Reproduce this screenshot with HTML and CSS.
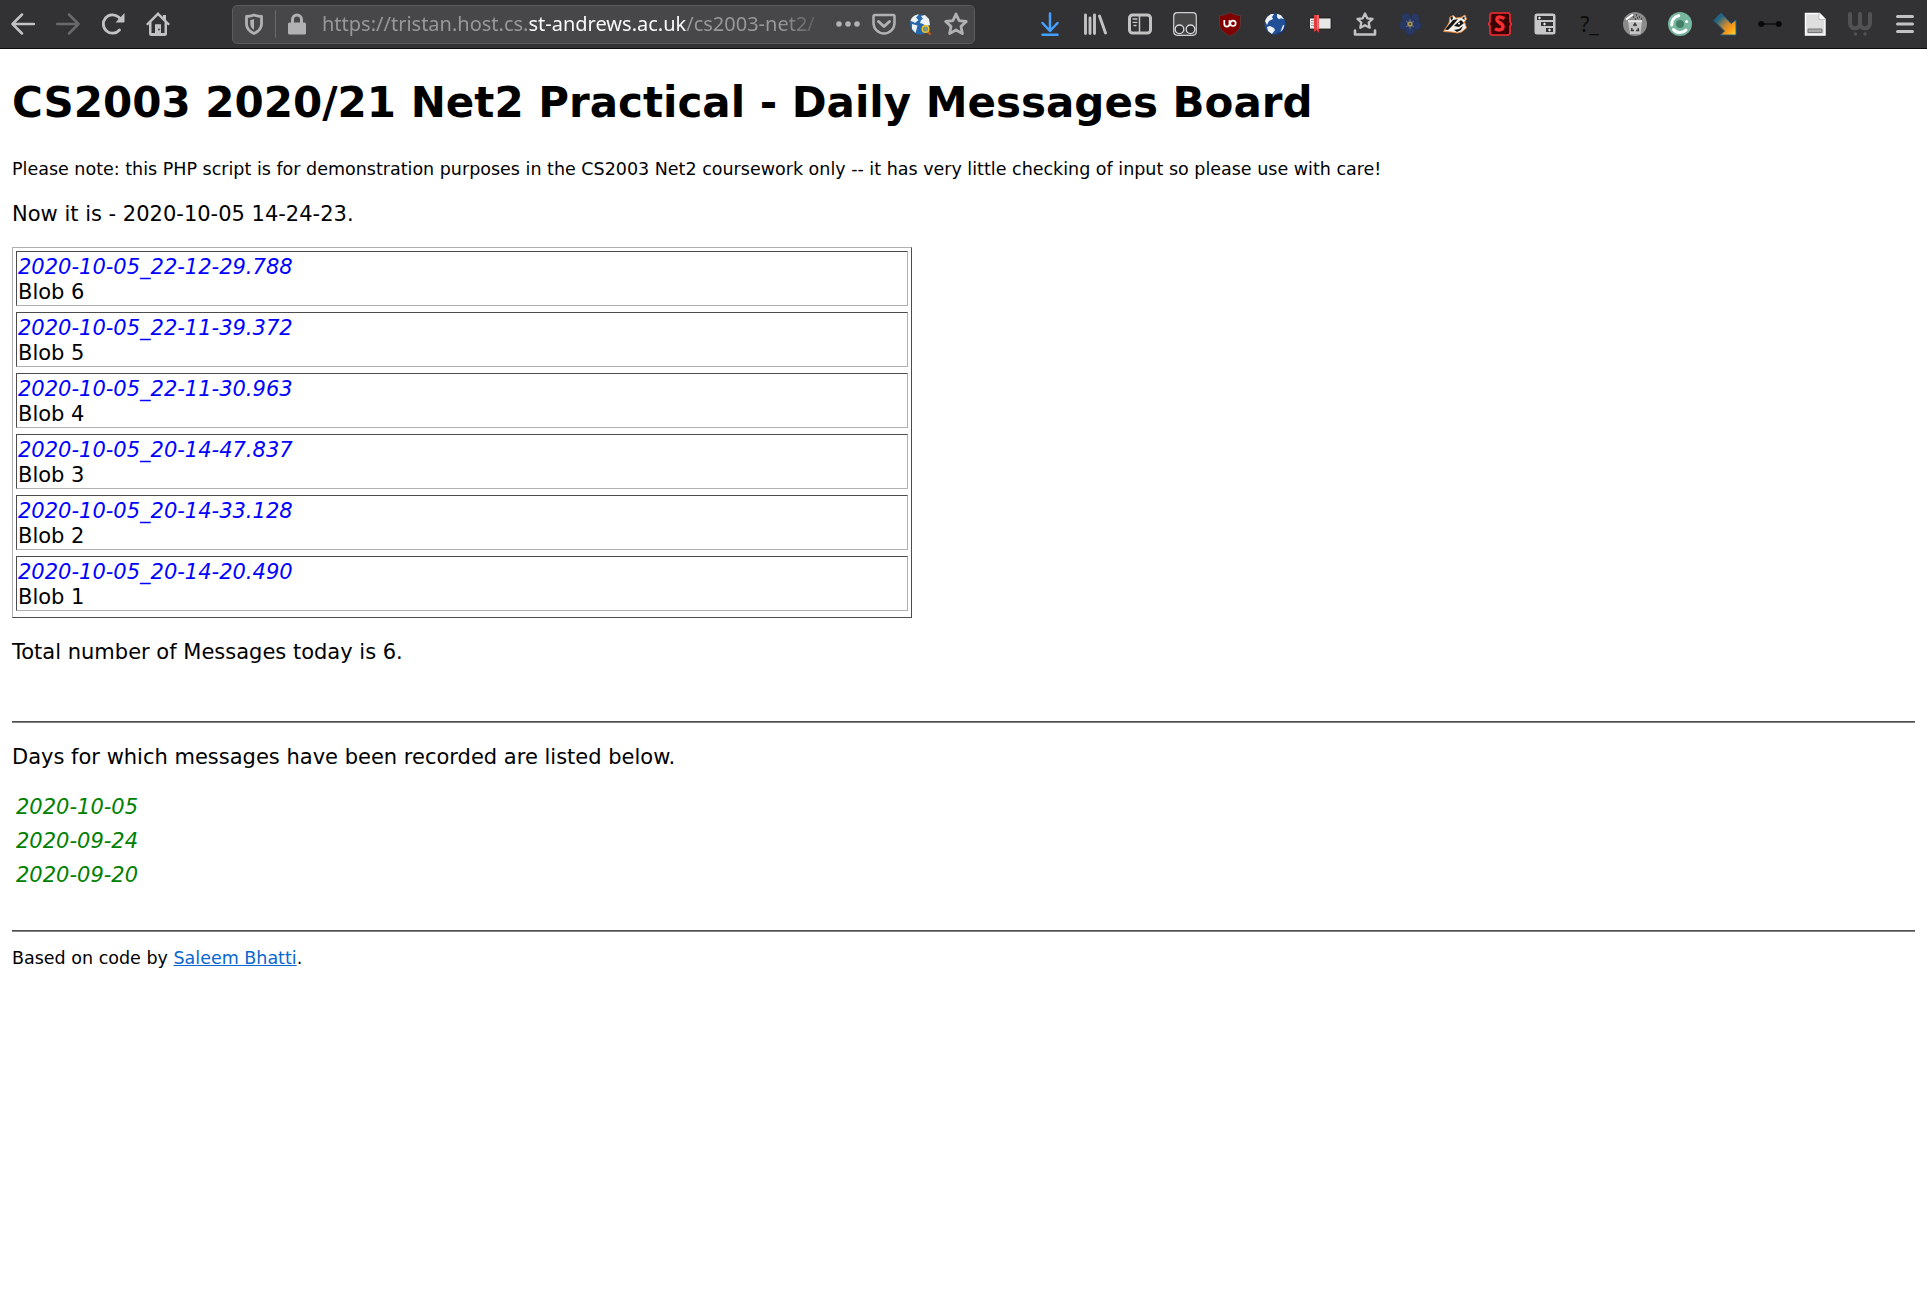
FILE: index.html
```html
<!DOCTYPE html>
<html lang="en">
<head>
<meta charset="utf-8">
<title>Daily Messages Board</title>
<link rel="stylesheet" href="styles.css">
</head>
<body>
<header class="toolbar">
  <nav class="tools" aria-label="Navigation">
    <button class="tool" aria-label="Back"><svg viewBox="0 0 24 24" class="line"><path d="M23 12H2M11 2.500L1.500 12l9.500 9.500"/></svg></button>
    <button class="tool dim" aria-label="Forward"><svg viewBox="0 0 24 24" class="line"><path d="M1 12h21M13 2.500l9.500 9.500-9.500 9.500"/></svg></button>
    <button class="tool" aria-label="Reload"><svg viewBox="0 0 24 24" class="line"><path d="M18.500 18a9.200 9.200 0 1 1-1-13l2.500 2.500" stroke-width="2.800"/><path d="M23.500 1v8.500a1 1 0 0 1-1 1h-8z" fill="currentColor" stroke="none"/></svg></button>
    <button class="tool" aria-label="Home"><svg viewBox="0 0 24 24"><path d="M12 0L0 12l1.600 1.600L3 12.300V21.500a2.500 2.500 0 0 0 2.500 2.500h13a2.500 2.500 0 0 0 2.500-2.500v-9.200l1.400 1.300L24 12l-4-4V3h-3v2zM12 3.400l6.500 6.500V21H15v-8.500H9V21H5.500V9.900z" fill="currentColor" fill-rule="evenodd"/><path d="M9 12.500h6V21H9z" fill="currentColor"/><circle cx="13" cy="17.500" r=".9" fill="#323234"/></svg></button>
  </nav>
  <div class="address">
    <button class="site" aria-label="Tracking protection"><svg viewBox="0 0 24 24" class="line"><path d="M12 3Q16 4.500 19.500 4.500V12c0 4-3 7.500-7.500 9.500C7.500 19.500 4.500 16 4.500 12V4.500Q8 4.500 12 3z" stroke-width="2.800"/><path d="M12 7v10.800C9.200 16 8.300 14 8.300 11.500V8Q10.500 8 12 7z" fill="currentColor" stroke="none"/></svg></button>
    <span class="rule"></span>
    <button class="site" aria-label="Connection secure"><svg viewBox="0 0 24 24"><path d="M7.500 11V7.500a4.500 4.500 0 0 1 9 0V11" fill="none" stroke="currentColor" stroke-width="3"/><rect x="3" y="10.500" width="18" height="12" rx="1.500" fill="currentColor"/></svg></button>
    <div class="url" role="textbox" contenteditable="true" spellcheck="false" aria-label="Address">https://tristan.host.cs.<span class="domain">st-andrews.ac.uk</span>/cs2003-net2/</div>
    <button class="action" aria-label="Page actions"><svg viewBox="0 0 24 24" fill="currentColor"><circle cx="3" cy="12" r="2.800"/><circle cx="12" cy="12" r="2.800"/><circle cx="21" cy="12" r="2.800"/></svg></button>
    <button class="action" aria-label="Save to Pocket"><svg viewBox="0 0 24 24" class="line"><path d="M2.800 3h18.400a1.300 1.300 0 0 1 1.300 1.300V11a10.500 10.500 0 0 1-21 0V4.300A1.300 1.300 0 0 1 2.800 3z"/><path d="M6.500 9.500l5.500 5 5.500-5" stroke-width="3"/></svg></button>
    <button class="action" aria-label="Site search"><svg viewBox="0 0 24 24"><circle cx="12" cy="12.500" r="10" fill="#2568ad"/><path d="M2.500 9C3.500 5 7 2.500 11 2.500L8 5.500 10.500 8 7 11l-1.500-1zM4 12l5.500 1.500-1 4L7.500 21 4 17zM13 4l4-1 4 4 1 6-4 1-3-2-3-1 1-3 2-1z" fill="#edf3f5"/><path d="M20 20l2.500 2.500" stroke="#b8571d" stroke-width="2.500"/><circle cx="17.500" cy="17" r="3.300" fill="#769492" stroke="#f2c51c" stroke-width="1.400"/></svg></button>
    <button class="action" aria-label="Bookmark this page"><svg viewBox="0 0 24 24" class="line"><path d="M12 2l3.100 6.600 7.200.9-5.300 4.900 1.400 7.200L12 18l-6.400 3.600L7 14.400 1.700 9.500l7.200-.9z" stroke-width="2.800"/></svg></button>
  </div>
  <div class="tools">
    <button class="tool blue" aria-label="Downloads"><svg viewBox="0 0 24 24" class="line"><path d="M12 1.500v17M4.500 11l7.500 8 7.500-8M4.500 22.700h15"/></svg></button>
    <button class="tool" aria-label="Library"><svg viewBox="0 0 24 24" class="line"><path d="M2.500 3v18.500M7 6v15.500M11.500 3v18.500M16.500 4l6 17" stroke-width="2.900"/></svg></button>
    <button class="tool" aria-label="Sidebars"><svg viewBox="0 0 24 24" class="line"><rect x="1.500" y="3" width="21" height="18" rx="3" stroke-width="3"/><path d="M11.500 4v16" stroke-width="1.500"/><path d="M5 7h4M5 10.300h4M6 13.500h2" stroke-width="1.300"/></svg></button>
    <button class="tool" aria-label="Containers"><svg viewBox="0 0 24 24"><rect x=".7" y=".7" width="22.600" height="22.600" rx="3.500" fill="#474747" stroke="#d0d0d0" stroke-width="1.200"/><g fill="#323234" stroke="#d8d8d8" stroke-width="1.300"><circle cx="6.500" cy="17.300" r="4.300"/><circle cx="17.500" cy="17.300" r="4.300"/></g></svg></button>
    <button class="tool" aria-label="Content blocker"><svg viewBox="0 0 24 24"><path d="M12 .5Q17 3.500 22.500 3.500V11c0 6-4 10-10.500 13C5.500 21 1.500 17 1.500 11V3.500Q7 3.500 12 .5z" fill="#800000" stroke="#5b3f40" stroke-width=".8"/><path d="M6.300 8v4a2.600 2.600 0 0 0 5.200 0V8" fill="none" stroke="#fff" stroke-width="1.700"/><circle cx="15" cy="11.300" r="2.700" fill="none" stroke="#fff" stroke-width="1.700"/></svg></button>
    <button class="tool" aria-label="Translate"><svg viewBox="0 0 24 24"><circle cx="12" cy="12" r="10.500" fill="#214f97"/><path d="M2 9l2-4 4-3h3L9 5l1 2-4 2-2 4zM14 1.800l4 1.400 3 4-3-1-2 1-2-2zM4 15l3-1 4 2 1 2-3 4-4-3zM20 13l2 1-2 5-3 2z" fill="#edf2f5"/><path d="M14 22a10 10 0 0 0 8-8" fill="none" stroke="#1b3474" stroke-width="1.500"/></svg></button>
    <button class="tool" aria-label="Bookmarks ribbon"><svg viewBox="0 0 24 24"><path d="M1.500 6H23v11H1.500z" fill="#e7e7e7" stroke="#171717" stroke-width=".8"/><path d="M3 8.500h3M3 11h3M3 13.500h3" stroke="#999"/><path d="M6 3h5v18l-2.500-3L6 20z" fill="#e43b3f"/><path d="M9 3h1.500v14H9z" fill="#ff7774"/></svg></button>
    <button class="tool" aria-label="Show bookmarks"><svg viewBox="0 0 24 24" class="line"><path d="M12 1.500l2.300 4.800 5.200.7-3.800 3.500 1 5.200-4.700-2.500-4.700 2.500 1-5.200L4.500 7l5.200-.7z" stroke-width="2.300"/><path d="M2 18.500v4h20v-4" stroke-width="2.600"/></svg></button>
    <button class="tool" aria-label="Forget me not"><svg viewBox="0 0 24 24"><g fill="#293966" stroke="#24315b" stroke-width=".6"><circle cx="8" cy="5.500" r="4.300"/><circle cx="17" cy="6" r="4.300"/><circle cx="5.500" cy="13.500" r="4.300"/><circle cx="19" cy="13.500" r="4.300"/><circle cx="12" cy="18.500" r="4.600"/><circle cx="12" cy="11" r="5"/></g><path d="M12 7v10M8 9l8 6M16 9l-8 6" stroke="#6d718c"/><circle cx="12" cy="12" r="2.600" fill="#a99a55"/><circle cx="12" cy="12" r="1.100" fill="#4b4533"/></svg></button>
    <button class="tool" aria-label="Privacy badger"><svg viewBox="0 0 24 24"><path d="M.5 19.500L6 11l1-6 3.500-1.500L13 6l5-.5L22 3l1.500 4-2 3 2 6-5 4-4 1-6-1z" fill="#f4f1eb" stroke="#e4863d" stroke-width="1"/><path d="M2 17.500L10 8l5-1-5 6-5 5zM13 12l5-4 3 3-5 4-5-1zM7.500 5l2-.5.5 2-2 2zM19 6l2.500-1.500V8zM11 18l5-1 4-3-2 4-4 2z" fill="#171717"/><circle cx="16" cy="11.500" r="1" fill="#fff"/></svg></button>
    <button class="tool" aria-label="Stylus"><svg viewBox="0 0 24 24"><path d="M3.500 1h17.300L22 2.500V10l1.500 2-1.500 2v7.500L20.500 23h-17L2 21.500V14L.5 12 2 10V2.500z" fill="#380202" stroke="#fb2c30" stroke-width="1.600"/><path d="M16.500 6.500Q8.500 3 9 8c.3 3 6.500 3 6 7-.4 3.500-5 3.500-8 1.800" fill="none" stroke="#fb2c30" stroke-width="3.500"/></svg></button>
    <button class="tool" aria-label="Tree tabs"><svg viewBox="0 0 24 24"><rect x="1.500" y="1.500" width="21" height="21" rx="2.500" fill="#c7c7c7"/><g fill="#323234"><path d="M4 4h16v4H4zM8 10h12v4H8zM13 16h7v4h-7z"/></g><path d="M5 6h3M10 12h3M15 18h3M6.500 4.700v2.600M11.500 10.700v2.600M16.500 16.700v2.600" stroke="#eee"/></svg></button>
    <button class="tool terminal" aria-label="Terminal">?_</button>
    <button class="tool" aria-label="Cookie cleaner"><svg viewBox="0 0 24 24"><circle cx="12" cy="12" r="12" fill="#8b8b8b"/><path d="M5 9h14l-1.500 13H7z" fill="#c4c4c4"/><path d="M3 7.500l7-5" stroke="#fff" stroke-width="2"/><path d="M5 9h14" stroke="#eee" stroke-width="1.500"/><path d="M10 5h1M13 3h1M16 5h1M12 7h1M18 7h1M14 6h1" stroke="#383838" stroke-width="1.500"/><path d="M10.500 14l1.500-2.500 1.500 2.500M15 16l.5 2.500H13M9 16l-.5 2.500H11" fill="none" stroke="#3a3a3a" stroke-width="1.500"/></svg></button>
    <button class="tool" aria-label="Session sync"><svg viewBox="0 0 24 24"><circle cx="12" cy="12" r="12" fill="#78b79f"/><circle cx="12" cy="12" r="4" fill="#437e67"/><path d="M3.800 13a8.300 8.300 0 0 1 7-9.300M5.500 17.500A8.300 8.300 0 0 0 18 18" fill="none" stroke="#fff" stroke-width="3" stroke-linecap="round"/><circle cx="18.700" cy="9.500" r="1.500" fill="#fff"/></svg></button>
    <button class="tool" aria-label="Send down"><svg viewBox="0 0 24 24"><defs><linearGradient id="arrow" x1="0" y1="0" x2="1" y2="1"><stop offset=".25" stop-color="#236684"/><stop offset=".55" stop-color="#cb8933"/><stop offset=".75" stop-color="#ff9d13"/><stop offset="1" stop-color="#ffe24a"/></linearGradient></defs><path d="M.8 8.500L8 1l10 10.500L23 8v15H7.500l4-4z" fill="url(#arrow)" stroke="#215d7c" stroke-width="1"/></svg></button>
    <button class="tool" aria-label="Link nodes"><svg viewBox="0 0 24 24" fill="#080808"><path d="M3 12h18" stroke="#080808" stroke-width="1.200"/><circle cx="3.300" cy="12" r="3"/><circle cx="20.700" cy="12" r="3"/></svg></button>
    <button class="tool" aria-label="Page notes"><svg viewBox="0 0 24 24"><path d="M2.500 1.500h14L22 7v16H2.500z" fill="#dedede" stroke="#fff" stroke-width="1.400"/><path d="M16 1v6.500h6" fill="#fff" stroke="#aaa" stroke-width=".7"/><path d="M5 17h14v3.500H5z" fill="#aaa" stroke="#777"/></svg></button>
    <button class="tool faint" aria-label="Wallet"><svg viewBox="0 0 24 24" class="line"><path d="M2 2v9c0 7 10 7 10 0V2M12 11c0 7 10 7 10 0V2" stroke-width="4"/><circle cx="7.500" cy="22" r="1.800" fill="currentColor" stroke="none"/><circle cx="17" cy="22" r="1.800" fill="currentColor" stroke="none"/></svg></button>
    <button class="tool" aria-label="Open menu"><svg viewBox="0 0 24 24" class="line"><path d="M4.500 4.500h15M4.500 12h15M4.500 19.500h15" stroke-width="3"/></svg></button>
  </div>
</header>
<main class="page">
  <h1>CS2003 2020/21 Net2 Practical - Daily Messages Board</h1>
  <p class="note"><small>Please note: this PHP script is for demonstration purposes in the CS2003 Net2 coursework only -- it has very little checking of input so please use with care!</small></p>
  <p>Now it is - 2020-10-05 14-24-23.</p>
  <table class="messages">
    <tr><td><em>2020-10-05_22-12-29.788</em><br>Blob 6</td></tr><tr></tr>
    <tr><td><em>2020-10-05_22-11-39.372</em><br>Blob 5</td></tr><tr></tr>
    <tr><td><em>2020-10-05_22-11-30.963</em><br>Blob 4</td></tr><tr></tr>
    <tr><td><em>2020-10-05_20-14-47.837</em><br>Blob 3</td></tr><tr></tr>
    <tr><td><em>2020-10-05_20-14-33.128</em><br>Blob 2</td></tr><tr></tr>
    <tr><td><em>2020-10-05_20-14-20.490</em><br>Blob 1</td></tr><tr></tr>
  </table>
  <p class="total">Total number of Messages today is 6.</p>
  <hr>
  <p>Days for which messages have been recorded are listed below.</p>
  <table class="days">
    <tr><td><em>2020-10-05</em></td></tr><tr></tr>
    <tr><td><em>2020-09-24</em></td></tr><tr></tr>
    <tr><td><em>2020-09-20</em></td></tr><tr></tr>
  </table>
  <hr>
  <p class="note credit"><small>Based on code by <a href="#">Saleem Bhatti</a>.</small></p>
</main>
</body>
</html>
```
FILE: styles.css
```css
* {
  box-sizing: border-box;
}

body {
  margin: 0;
  background: #fff;
  color: #000;
  font: 21px/25px "DejaVu Sans", sans-serif;
}

/* Browser toolbar */
.toolbar {
  display: flex;
  align-items: center;
  height: 49px;
  background: #323234;
  border-bottom: 1px solid #0c0c0d;
}

.tools {
  display: flex;
  flex: none;
}

button {
  display: flex;
  align-items: center;
  justify-content: center;
  flex: none;
  height: 38px;
  padding: 0;
  border: 0;
  background: none;
  color: inherit;
  font: inherit;
}

.tool {
  width: 45px;
  color: #c2c2c3;
}

.tool svg,
.action svg,
.site svg {
  width: 24px;
  height: 24px;
}

.dim {
  color: #69696b;
}

.blue {
  color: #45a1ff;
}

.faint {
  color: #525254;
}

.terminal {
  color: #0c0c0c;
  font-family: "Noto Sans", sans-serif;
}

.line {
  fill: none;
  stroke: currentColor;
  stroke-width: 2.5;
  stroke-linecap: round;
  stroke-linejoin: round;
}

.address {
  display: flex;
  align-items: center;
  flex: 1;
  min-width: 0;
  height: 39px;
  margin: 0 52px;
  border: 1px solid #5b5b5d;
  border-radius: 5px;
  background: #474749;
  color: #b1b1b3;
}

.site {
  width: 42px;
}

.rule {
  width: 1px;
  height: 28px;
  background: #69696b;
}

.url {
  flex: 1;
  min-width: 0;
  margin-left: 4px;
  overflow: hidden;
  outline: none;
  white-space: nowrap;
  color: #98989a;
  font: 20px/30px "Noto Sans", sans-serif;
  -webkit-mask-image: linear-gradient(to left, transparent, #000 50px);
  mask-image: linear-gradient(to left, transparent, #000 50px);
}

.domain {
  color: #f9f9fa;
}

.action {
  width: 36px;
}

/* Message board */
.page {
  padding: 29px 12px;
}

h1 {
  margin: 0 0 30px;
  font-size: 42px;
  line-height: 49px;
}

p {
  margin: 22px 0 20px;
}

.note {
  margin-top: 0;
  line-height: 22px;
}

small {
  font-size: smaller;
}

table {
  border-spacing: 3px;
}

td {
  padding: 2px 1px 1px;
}

.messages {
  width: 900px;
  max-width: 100%;
  border: 1px solid;
  border-color: #b0b0b0 #4c4c4c #4c4c4c #b0b0b0;
}

.messages td {
  padding: 3px 1px 0;
  border: 1px solid;
  border-color: #4c4c4c #b0b0b0 #b0b0b0 #4c4c4c;
}

.messages em {
  color: #00f;
}

.days em {
  color: #008000;
}

.total {
  margin-bottom: 56px;
}

hr {
  height: 2px;
  margin: 0;
  border: 0;
  border-top: 1px solid #505052;
  background: #808080;
}

.days {
  margin-bottom: 35px;
}

.credit {
  margin: 14px 0 0;
}

a {
  color: #0a66d1;
}
```
